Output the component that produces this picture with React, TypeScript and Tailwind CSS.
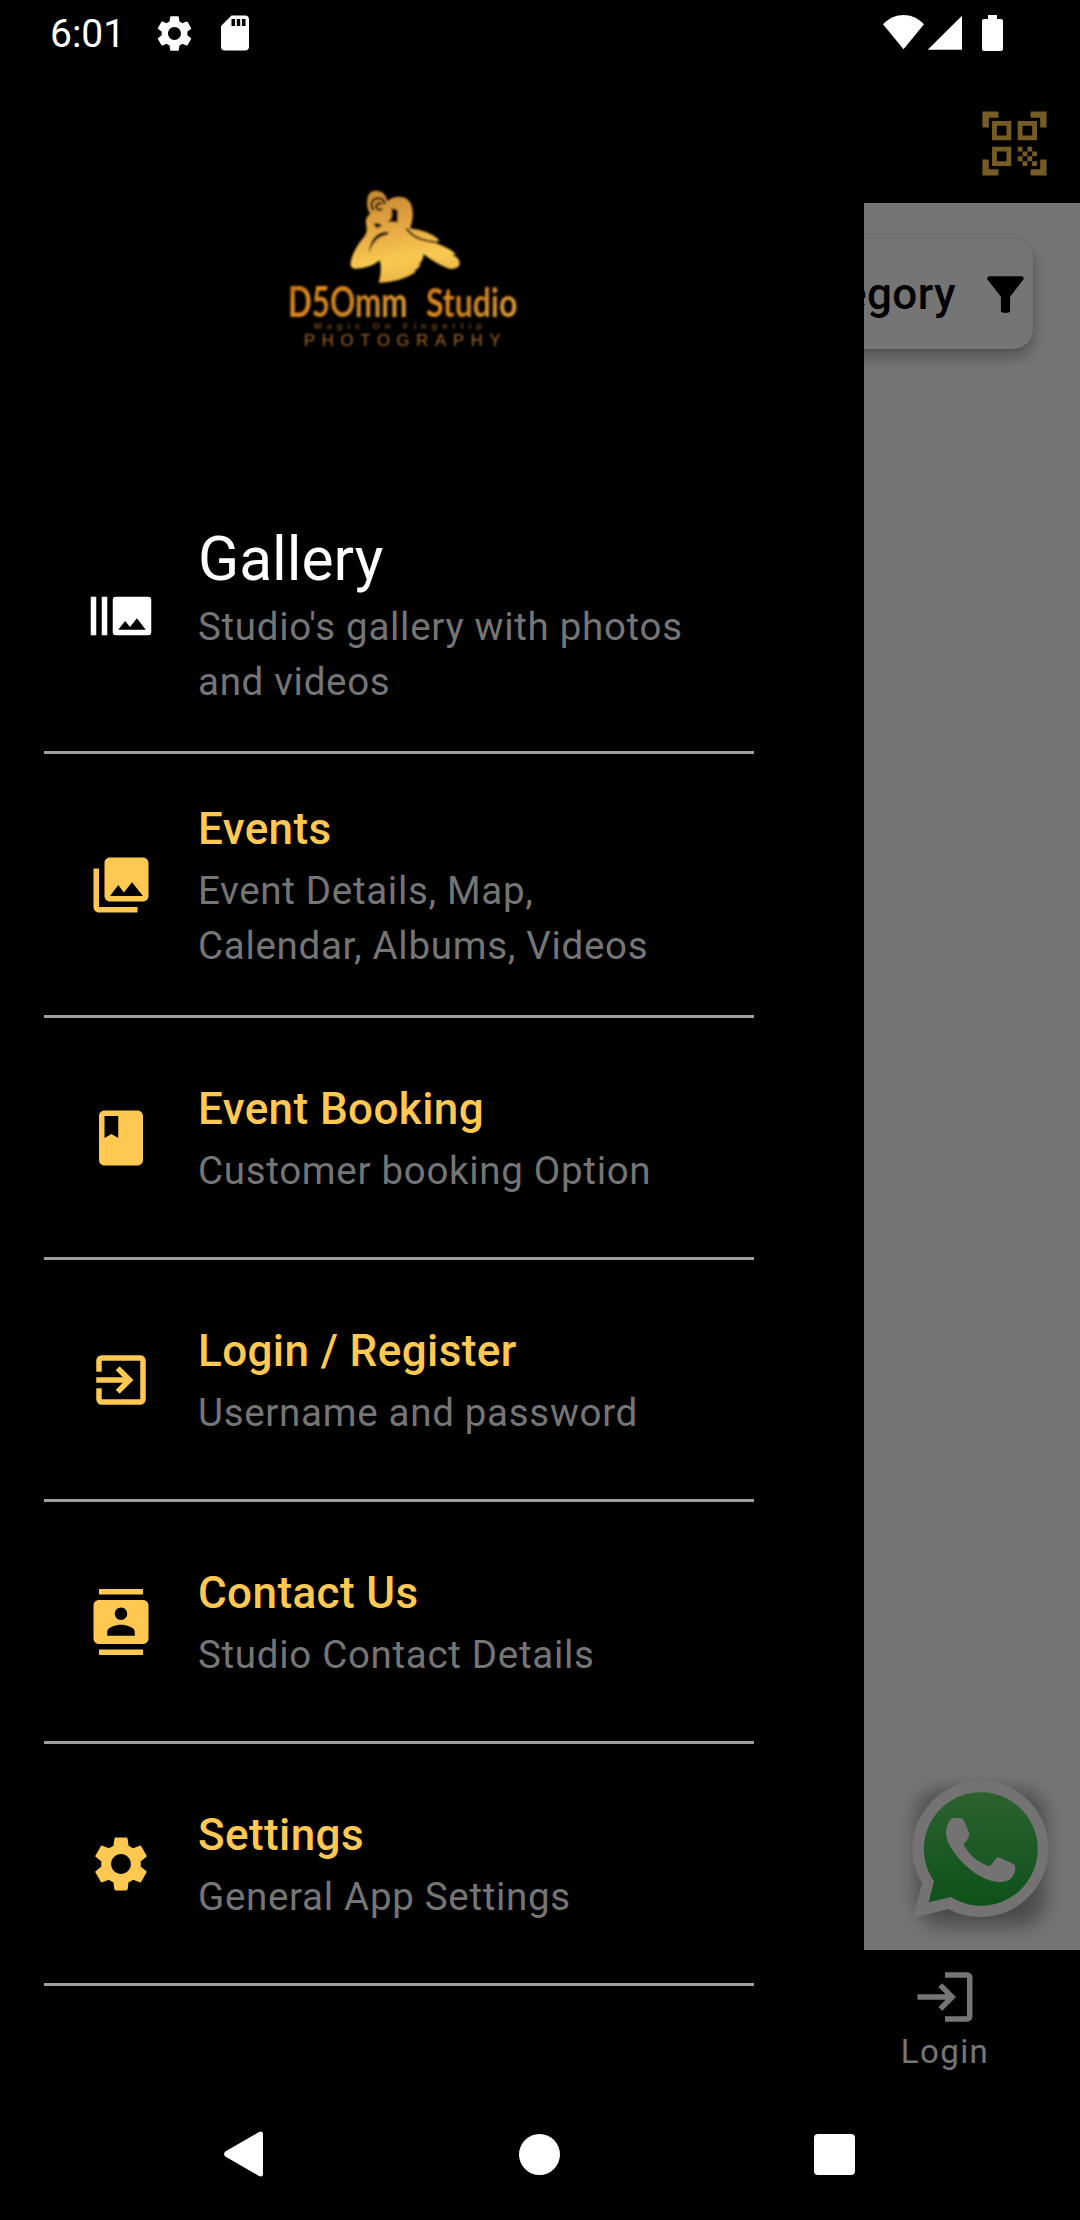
import type { IconType } from 'react-icons';
import {
  MdBook,
  MdBurstMode,
  MdContacts,
  MdExitToApp,
  MdFilterAlt,
  MdLogin,
  MdPhotoLibrary,
  MdQrCodeScanner,
  MdSdStorage,
  MdSettings,
} from 'react-icons/md';
import clsx from 'clsx';

interface MenuItem {
  title: string;
  subtitle: string;
  icon: IconType;
  active?: boolean;
  tall?: boolean;
}

const menuItems: MenuItem[] = [
  { title: 'Gallery', subtitle: "Studio's gallery with photos and videos", icon: MdBurstMode, active: true },
  { title: 'Events', subtitle: 'Event Details, Map, Calendar, Albums, Videos', icon: MdPhotoLibrary, tall: true },
  { title: 'Event Booking', subtitle: 'Customer booking Option', icon: MdBook },
  { title: 'Login / Register', subtitle: 'Username and password', icon: MdExitToApp },
  { title: 'Contact Us', subtitle: 'Studio Contact Details', icon: MdContacts },
  { title: 'Settings', subtitle: 'General App Settings', icon: MdSettings },
];

const StatusBar = () => (
  <div className="relative z-20 flex h-[66px] shrink-0 items-center justify-between pl-[50px] pr-[77px] text-white">
    <div className="flex items-center">
      <span className="w-[103px] pt-[2px] text-[39px] leading-[66px]">6:01</span>
      <MdSettings className="size-[43px]" />
      <MdSdStorage className="ml-[18px] size-[42px]" />
    </div>
    <svg className="h-[36px] w-[120px]" viewBox="0 0 120 36" fill="currentColor">
      <path d="M0 9.3C12-3 29-3 41 9.3L20.5 34.3Z" />
      <path d="M44.7 34.7 79 .7v34Z" />
      <path d="M105 0h9v4h4a2 2 0 0 1 2 2v28a2 2 0 0 1-2 2h-17a2 2 0 0 1-2-2V6a2 2 0 0 1 2-2h4Z" />
    </svg>
  </div>
);

const SystemNav = () => (
  <div className="relative z-20 flex h-[132px] shrink-0 items-center justify-between pl-[224px] pr-[225px] text-white">
    <svg className="h-[46px] w-[39px]" viewBox="0 0 39 46" fill="currentColor">
      <path d="M1.3 20.6 34.6 1.2Q39-.8 39 3.6V42.4Q39 46.8 34.6 44.8L1.3 25.4Q-1.2 23 1.3 20.6Z" />
    </svg>
    <div className="mr-[-2px] size-[41px] rounded-full bg-white" />
    <div className="size-[41px] rounded-[4px] bg-white" />
  </div>
);

const StudioLogo = () => (
  <svg className="h-[190px] w-[280px]" viewBox="0 0 840 570">
    <defs>
      <linearGradient id="gold" x1="0.3" y1="0" x2="0.5" y2="1">
        <stop offset="0" stopColor="#c98a32" />
        <stop offset="0.4" stopColor="#e6a843" />
        <stop offset="0.75" stopColor="#f8c950" />
        <stop offset="1" stopColor="#ecb548" />
      </linearGradient>
      <linearGradient id="lettering" x1="0" y1="0" x2="1" y2="0.6">
        <stop offset="0" stopColor="#b8610f" />
        <stop offset="0.3" stopColor="#e08a1c" />
        <stop offset="0.6" stopColor="#c98020" />
        <stop offset="1" stopColor="#d99a32" />
      </linearGradient>
      <filter id="soft">
        <feGaussianBlur stdDeviation="3" />
      </filter>
    </defs>
    <g filter="url(#soft)">
      {/* photographer holding a camera */}
      <g transform="translate(255 45)">
        <path
          fill="url(#gold)"
          d="M72 27C80 15 104 14 117 27Q125 36 127 48C142 34 172 30 188 44C206 58 208 98 195 130C228 134 266 146 284 168L262 171C292 181 318 192 333 208L322 210C340 216 348 230 342 243Q332 254 314 251C290 244 262 228 236 207Q236 226 219 241L229 237Q222 250 208 258L214 260C182 282 142 292 101 293Q112 256 104 226C86 242 58 252 28 251Q14 248 17 232C22 206 34 184 50 164C60 152 66 146 65 128C60 108 62 94 76 86C66 76 62 46 72 27Z"
        />
        <path fill="none" stroke="#120a00" strokeWidth="7" d="M86 76C74 58 80 42 98 40C112 39 119 48 119 58M110 58C100 50 90 60 96 70Q102 78 112 72" />
        <path fill="#0a0500" d="M138 72Q152 66 159 80L159 112L128 111Q146 98 138 72ZM86 116Q100 110 112 122L94 130Z" />
        <path fill="#0a0500" d="M72 204C74 166 94 138 130 140L128 150C104 150 84 168 72 204Z" />
        <path fill="none" stroke="#170c00" strokeWidth="6" d="M184 130C204 160 240 168 278 172" />
      </g>
      <g fill="url(#lettering)" fontFamily="Lato, 'Liberation Sans', sans-serif" fontWeight="700">
        <text x="84" y="440" fontSize="125" textLength="358" lengthAdjust="spacingAndGlyphs">
          D5Omm
        </text>
        <text x="498" y="440" fontSize="122" textLength="274" lengthAdjust="spacingAndGlyphs">
          Studio
        </text>
      </g>
      <text x="162" y="477" fill="#6e4519" fontFamily="'Liberation Sans', sans-serif" fontSize="28" fontWeight="700" textLength="504">
        Magic On Fingertip
      </text>
      <text x="132" y="528" fill="#a8682a" fontFamily="'Liberation Sans', sans-serif" fontSize="50" textLength="590">
        PHOTOGRAPHY
      </text>
    </g>
  </svg>
);

const WhatsAppButton = () => (
  <svg className="h-[210px] w-[240px]" viewBox="0 0 720 630">
    <defs>
      <linearGradient id="whatsapp" x1="0" y1="0" x2="0" y2="1">
        <stop offset="0" stopColor="#60d66a" />
        <stop offset="1" stopColor="#20b038" />
      </linearGradient>
      <filter id="fabShadow" x="-30%" y="-30%" width="160%" height="160%">
        <feGaussianBlur stdDeviation="30" />
      </filter>
    </defs>
    <rect x="228" y="150" width="390" height="410" rx="80" fill="#000" opacity="0.36" filter="url(#fabShadow)" />
    <path
      fill="#fcf8fa"
      d="M422 122A204.500 204.500 0 1 1 325 507L218 534L246 431A204.500 204.500 0 0 1 422 122Z"
    />
    <path
      fill="url(#whatsapp)"
      d="M422 157A170 170 0 1 1 333 471L266 487L282 424A170 170 0 0 1 422 157Z"
    />
    <path
      fill="#fcf8fa"
      d="M342 234L362 234Q370 235 373 243L387 280Q389 286 385 293L372 312Q371 315 373 318C390 346 415 369 450 379L468 356Q473 350 480 353L520 372Q526 375 526 384C525 408 510 426 480 426C445 426 398 402 360 359C330 325 317 296 318 275C319 255 330 234 342 234Z"
    />
  </svg>
);

const GalleryPage = () => (
  <>
    <div className="flex h-[137px] shrink-0 justify-end pr-[27px] pt-[39px]">
      <MdQrCodeScanner className="size-[77px] text-[#ffc850]" />
    </div>
    <div className="flex flex-1 flex-col justify-between bg-white">
      <div className="mx-[47px] mt-[36px] flex h-[110px] items-center justify-end rounded-[20px] bg-white shadow-[0_8px_16px_rgba(0,0,0,0.3),0_1px_3px_rgba(0,0,0,0.12)]">
        <span className="text-[44px] font-medium tracking-[0.4px] text-black">Category</span>
        <MdFilterAlt className="ml-[22px] size-[55px] text-black" />
      </div>
      <div className="flex justify-end">
        <WhatsAppButton />
      </div>
    </div>
    <div className="flex h-[138px] shrink-0 justify-end">
      <div className="flex w-[270px] flex-col items-center pt-[14px] text-white">
        <MdLogin className="size-[66px]" />
        <span className="text-[33px] leading-[44px] tracking-[1.4px]">Login</span>
      </div>
    </div>
  </>
);

const DrawerItem = ({ title, subtitle, icon: Icon, active, tall }: MenuItem) => (
  <li
    className={clsx(
      'flex items-center border-b-3 border-[#9e9e9e] pl-[44px] pr-[60px]',
      active ? 'h-[274px]' : tall ? 'h-[264px]' : 'h-[242px]',
    )}
  >
    <Icon className={clsx('size-[66px] shrink-0', active ? 'text-white' : 'text-[#ffc850]')} />
    <div className="ml-[44px] flex flex-col gap-px pb-px">
      <span
        className={clsx(
          active
            ? 'text-[60.5px] leading-[76px] text-white'
            : 'text-[44px] font-medium leading-[66px] tracking-[0.4px] text-[#ffc850]',
        )}
      >
        {title}
      </span>
      <span className="text-[38.5px] leading-[55px] tracking-[0.7px] text-[#757575]">{subtitle}</span>
    </div>
  </li>
);

const Drawer = () => (
  <aside className="absolute inset-y-0 left-0 z-10 w-[864px] bg-black">
    <div className="flex h-[480px] justify-center pr-[64px] pt-[170px]">
      <StudioLogo />
    </div>
    <ul className="ml-[44px] w-[710px]">
      {menuItems.map((item) => (
        <DrawerItem key={item.title} {...item} />
      ))}
    </ul>
  </aside>
);

export default function App() {
  return (
    <div className="relative flex h-[2220px] w-[1080px] flex-col overflow-hidden bg-black font-[Roboto,sans-serif]">
      <StatusBar />
      <GalleryPage />
      <div className="absolute inset-0 bg-black/54" />
      <Drawer />
      <SystemNav />
    </div>
  );
}
